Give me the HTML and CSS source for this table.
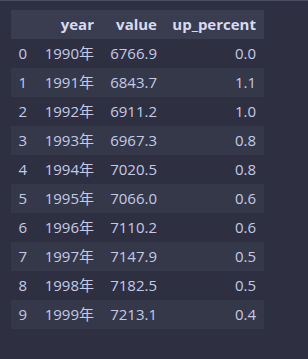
FILE: index.html
```html
<!DOCTYPE html>
<html>
<head>
<meta charset="utf-8">
<link rel="stylesheet" href="styles.css">
</head>
<body>
<div class="wrap">
<table class="df">
<colgroup><col class="c1"><col class="c2"><col class="c3"><col class="c4"></colgroup>
<thead>
<tr><th></th><th>year</th><th>value</th><th>up_percent</th></tr>
</thead>
<tbody>
<tr><td>0</td><td>1990年</td><td>6766.9</td><td>0.0</td></tr>
<tr><td>1</td><td>1991年</td><td>6843.7</td><td>1.1</td></tr>
<tr><td>2</td><td>1992年</td><td>6911.2</td><td>1.0</td></tr>
<tr><td>3</td><td>1993年</td><td>6967.3</td><td>0.8</td></tr>
<tr><td>4</td><td>1994年</td><td>7020.5</td><td>0.8</td></tr>
<tr><td>5</td><td>1995年</td><td>7066.0</td><td>0.6</td></tr>
<tr><td>6</td><td>1996年</td><td>7110.2</td><td>0.6</td></tr>
<tr><td>7</td><td>1997年</td><td>7147.9</td><td>0.5</td></tr>
<tr><td>8</td><td>1998年</td><td>7182.5</td><td>0.5</td></tr>
<tr><td>9</td><td>1999年</td><td>7213.1</td><td>0.4</td></tr>
</tbody>
</table>
</div>
</body>
</html>
```
FILE: styles.css
```css
html, body {
  margin: 0;
  padding: 0;
  background: #2e3042;
  height: 100%;
}
.wrap {
  border-top: 1px solid #4b4e62;
  padding: 9px 0 0 11px;
}
.df {
  border-collapse: collapse;
  table-layout: fixed;
  width: 253px;
  font-family: "Open Sans", "Noto Sans CJK SC", sans-serif;
  font-size: 15px;
  color: #c4cae6;
}
.c1 { width: 24px; }
.c2 { width: 67px; }
.c3 { width: 63px; }
.c4 { width: 99px; }
.df th, .df td {
  height: 29px;
  padding: 0 8px 0 0;
  text-align: right;
  white-space: nowrap;
  line-height: 29px;
}
.df thead tr { background: #3a3d4f; }
.df th { font-weight: 700; color: #d6dbf2; }
.df tbody tr:nth-child(even) { background: #353849; }
```
